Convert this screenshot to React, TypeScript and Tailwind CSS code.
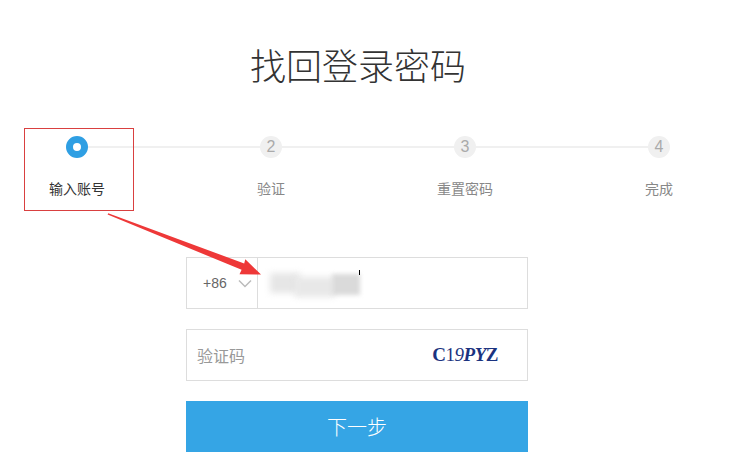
const steps = ["输入账号", "验证", "重置密码", "完成"];

function StepDot({ index }: { index: number }) {
    if (index === 0) {
        return (
            <div className="w-[22px] h-[22px] rounded-full border-[7px] border-[#2f9fe3] bg-white shrink-0" />
        );
    }
    return (
        <div className="w-[22px] h-[22px] rounded-full bg-[#f0f0f0] text-[#aaa] text-[16px] leading-[22px] text-center shrink-0 font-['Liberation_Sans',sans-serif]">
            {index + 1}
        </div>
    );
}

function Arrow() {
    return (
        <svg
            className="absolute left-0 top-0 pointer-events-none"
            width="733"
            height="470"
            viewBox="0 0 733 470"
        >
            <polygon
                points="107.6,214.6 108.2,213.2 244.2,263.5 245.3,259.2 261,274.5 239.5,274.2 241.6,269.8"
                fill="#ee3838"
            />
        </svg>
    );
}

export default function App() {
    return (
        <div className="relative w-[733px] h-[470px] bg-white overflow-hidden font-['Noto_Sans_CJK_SC',sans-serif]">
            <h1 className="pt-[40px] pr-[17px] text-center text-[36px] leading-[48px] font-light text-[#333]">
                找回登录密码
            </h1>

            {/* steps */}
            <div className="mt-[48px] flex items-center h-[22px] pl-[66px] pr-[63px]">
                {steps.map((s, i) => (
                    <div key={s} className={i < steps.length - 1 ? "flex items-center flex-1" : "flex items-center"}>
                        <StepDot index={i} />
                        {i < steps.length - 1 && <div className="flex-1 h-[2px] bg-[#f0f0f0]" />}
                    </div>
                ))}
            </div>
            <div className="mt-[20px] flex gap-[84px] pl-[22px]">
                {steps.map((s, i) => (
                    <div
                        key={s}
                        className={
                            i === 0
                                ? "w-[110px] text-center text-[14px] leading-[20px] text-[#333]"
                                : "w-[110px] text-center text-[14px] leading-[20px] text-[#888]"
                        }
                    >
                        {s}
                    </div>
                ))}
            </div>

            {/* form */}
            <div className="ml-[186px] mt-[59px] w-[342px] flex flex-col gap-[20px]">
                <div className="h-[52px] border border-[#ddd] flex">
                    <div className="w-[71px] border-r border-[#ddd] flex items-center pl-[16px] gap-[11px]">
                        <span className="text-[14px] text-[#666] font-['Liberation_Sans',sans-serif]">+86</span>
                        <svg width="14" height="9" viewBox="0 0 14 9">
                            <path d="M1 1.5 L7 7.5 L13 1.5" fill="none" stroke="#bbb" strokeWidth="1.5" />
                        </svg>
                    </div>
                    <div className="flex-1 flex items-center pl-[12px]">
                        <div className="relative w-[92px] h-[26px]">
                            <div className="absolute left-0 top-[3px] w-[30px] h-[20px] bg-[#e6e6e6] blur-[3px]" />
                            <div className="absolute left-[25px] top-[7px] w-[40px] h-[20px] bg-[#e8e8e8] blur-[3px]" />
                            <div className="absolute left-[62px] top-[4px] w-[28px] h-[21px] bg-[#dadada] blur-[2px]" />
                            <div className="absolute left-[89px] top-0 w-[1px] h-[5px] bg-black" />
                        </div>
                    </div>
                </div>
                <div className="h-[52px] border border-[#ddd] flex items-center justify-between pl-[10px] pr-[29px]">
                    <span className="text-[16px] text-[#999]">验证码</span>
                    <span className="font-['Liberation_Serif',serif] text-[19px] text-[#1b3380] tracking-[-0.5px]">
                        <span className="font-bold">C</span>
                        <span>1</span>
                        <span className="italic">9</span>
                        <span className="italic font-semibold">PY</span>
                        <span className="font-bold">Z</span>
                    </span>
                </div>
                <button className="h-[51px] bg-[#35a5e5] text-white text-[20px] font-light">
                    下一步
                </button>
            </div>

            {/* annotation */}
            <div className="absolute left-[24px] top-[128px] w-[110px] h-[83px] border border-[#d94040]" />
            <Arrow />
        </div>
    );
}
